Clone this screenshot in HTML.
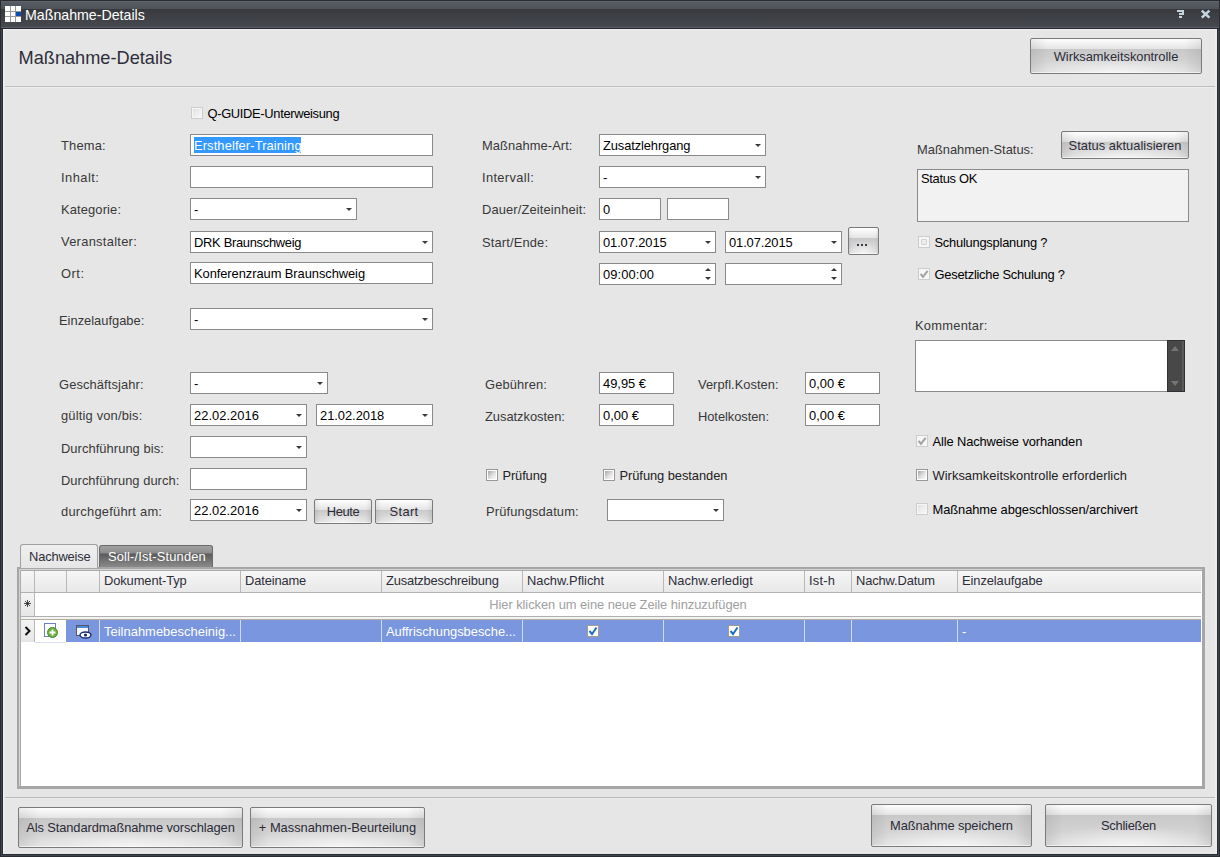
<!DOCTYPE html><html><head><meta charset="utf-8"><style>
html,body{margin:0;padding:0;}
body{width:1220px;height:857px;overflow:hidden;position:relative;background:#2b2e33;font-family:"Liberation Sans",sans-serif;}
.a{position:absolute;}
.t{position:absolute;white-space:pre;font-family:"Liberation Sans",sans-serif;}
</style></head><body>
<div class="a" style="left:0px;top:0px;width:1220px;height:857px;background:#2a2d32;"></div>
<div class="a" style="left:1px;top:1px;width:1218px;height:1px;background:#60646c;"></div>
<div class="a" style="left:1px;top:2px;width:1218px;height:7px;background:linear-gradient(#575b63,#4e525a);"></div>
<div class="a" style="left:1px;top:9px;width:1218px;height:18px;background:linear-gradient(#38393d,#46494f);"></div>
<div class="a" style="left:1px;top:27px;width:1218px;height:1px;background:#5b5e66;"></div>
<div class="a" style="left:0px;top:28px;width:1220px;height:1px;background:#23262b;"></div>
<div class="a" style="left:5px;top:6px;width:16px;height:16px;background:#ffffff;"></div>
<div class="a" style="left:10px;top:6px;width:1px;height:16px;background:#9a9a9a;"></div>
<div class="a" style="left:5px;top:11px;width:16px;height:1px;background:#9a9a9a;"></div>
<div class="a" style="left:15px;top:6px;width:1px;height:16px;background:#9a9a9a;"></div>
<div class="a" style="left:5px;top:16px;width:16px;height:1px;background:#9a9a9a;"></div>
<div class="a" style="left:16px;top:12px;width:5px;height:4px;background:#0a4fb0;"></div>
<div class="t" style="left:25px;top:7.00px;font-size:14.2px;line-height:16px;color:#ffffff;">Maßnahme-Details</div>
<div class="a" style="left:1177px;top:10px;width:7px;height:2px;background:#c6d4e0;"></div>
<div class="a" style="left:1182px;top:12px;width:2px;height:3px;background:#c6d4e0;"></div>
<div class="a" style="left:1179px;top:13px;width:5px;height:2px;background:#c6d4e0;"></div>
<div class="a" style="left:1179px;top:16px;width:3px;height:2px;background:#c6d4e0;"></div>
<svg class="a" style="left:1200px;top:9px" width="12" height="11"><path d="M1.8 1.6L9.4 8.6M9.4 1.6L1.8 8.6" stroke="#c6d4e0" stroke-width="2.6"/></svg>
<div class="a" style="left:1px;top:29px;width:1px;height:827px;background:#42464d;"></div>
<div class="a" style="left:1218px;top:29px;width:1px;height:827px;background:#42464d;"></div>
<div class="a" style="left:1px;top:855px;width:1218px;height:1px;background:#42464d;"></div>
<div class="a" style="left:3px;top:29px;width:1214px;height:825px;background:#e6e6e6;"></div>
<div class="a" style="left:3px;top:29px;width:1214px;height:1px;background:#f0f0f0;"></div>
<div class="a" style="left:3px;top:29px;width:1px;height:825px;background:#f0f0f0;"></div>
<div class="a" style="left:4px;top:30px;width:1px;height:823px;background:#eaeaea;"></div>
<div class="a" style="left:5px;top:86px;width:1210px;height:1px;background:#bdbdbd;"></div>
<div class="a" style="left:5px;top:87px;width:1210px;height:1px;background:#eeeeee;"></div>
<div class="a" style="left:1215px;top:30px;width:2px;height:824px;background:#ececec;"></div>
<div class="t" style="left:18.5px;top:49.50px;font-size:18.2px;line-height:16px;color:#2e2e3a;">Maßnahme-Details</div>
<div class="a" style="left:1030px;top:38px;width:172px;height:36px;box-sizing:border-box;border:1px solid #7a7a7a;border-radius:2px;background:radial-gradient(ellipse 55% 50% at 50% 100%, rgba(255,255,255,0.7), rgba(255,255,255,0) 100%),linear-gradient(to right, rgba(0,0,0,0.07), rgba(0,0,0,0) 10%, rgba(0,0,0,0) 90%, rgba(0,0,0,0.07)),linear-gradient(#fefefe 0px, #e4e4e4 10px, #c8c8c8 10px, #d0d0d0 55%, #dedede 100%);box-shadow:inset 0 -1px 0 rgba(255,255,255,0.6);"></div>
<div class="t" style="left:1030px;width:172px;text-align:center;top:48.50px;font-size:12.9px;line-height:16px;color:#2b2b38;letter-spacing:-0.038px;">Wirksamkeitskontrolle</div>
<div class="a" style="left:5px;top:797px;width:1210px;height:1px;background:#b8b8b8;"></div>
<div class="a" style="left:5px;top:798px;width:1210px;height:1px;background:#eeeeee;"></div>
<div class="a" style="left:191px;top:107px;width:12px;height:12px;box-sizing:border-box;border:1px solid #cdcdcd;background:#f6f6f6;"></div>
<div class="a" style="left:193px;top:109px;width:8px;height:8px;background:linear-gradient(135deg,#e2e2e2,#f8f8f8);"></div>
<div class="t" style="left:207.5px;top:105.50px;font-size:12.9px;line-height:16px;color:#000;letter-spacing:-0.326px;">Q-GUIDE-Unterweisung</div>
<div class="t" style="left:61px;top:137.50px;font-size:12.9px;line-height:16px;color:#383838;letter-spacing:0.2px;">Thema:</div>
<div class="a" style="left:190px;top:134px;width:243px;height:22px;box-sizing:border-box;border:1px solid #8a8a8a;background:#fff;"></div>
<div class="a" style="left:194px;top:137px;width:107px;height:16px;background:#3399ff;"></div>
<div class="t" style="left:194px;top:137.50px;font-size:12.9px;line-height:16px;color:#fff;letter-spacing:0.111px;">Ersthelfer-Training</div>
<div class="t" style="left:61px;top:169.50px;font-size:12.9px;line-height:16px;color:#383838;letter-spacing:0.467px;">Inhalt:</div>
<div class="a" style="left:190px;top:166px;width:243px;height:22px;box-sizing:border-box;border:1px solid #8a8a8a;background:#fff;"></div>
<div class="t" style="left:61px;top:201.50px;font-size:12.9px;line-height:16px;color:#383838;letter-spacing:0.133px;">Kategorie:</div>
<div class="a" style="left:190px;top:198px;width:167px;height:22px;box-sizing:border-box;border:1px solid #8a8a8a;background:#fff;"></div>
<div class="a" style="left:346px;top:208px;width:0;height:0;border-left:3px solid transparent;border-right:3px solid transparent;border-top:3px solid #3a3a3a;"></div>
<div class="t" style="left:194px;top:201.50px;font-size:12.9px;line-height:16px;color:#000;">-</div>
<div class="t" style="left:61px;top:233.50px;font-size:12.9px;line-height:16px;color:#383838;letter-spacing:0.283px;">Veranstalter:</div>
<div class="a" style="left:190px;top:231px;width:243px;height:22px;box-sizing:border-box;border:1px solid #8a8a8a;background:#fff;"></div>
<div class="a" style="left:422px;top:241px;width:0;height:0;border-left:3px solid transparent;border-right:3px solid transparent;border-top:3px solid #3a3a3a;"></div>
<div class="t" style="left:194px;top:234.50px;font-size:12.9px;line-height:16px;color:#000;letter-spacing:-0.287px;">DRK Braunschweig</div>
<div class="t" style="left:61px;top:265.50px;font-size:12.9px;line-height:16px;color:#383838;letter-spacing:0.5px;">Ort:</div>
<div class="a" style="left:190px;top:262px;width:243px;height:22px;box-sizing:border-box;border:1px solid #8a8a8a;background:#fff;"></div>
<div class="t" style="left:194px;top:265.50px;font-size:12.9px;line-height:16px;color:#000;letter-spacing:-0.064px;">Konferenzraum Braunschweig</div>
<div class="t" style="left:59px;top:312.50px;font-size:12.9px;line-height:16px;color:#383838;">Einzelaufgabe:</div>
<div class="a" style="left:190px;top:308px;width:243px;height:22px;box-sizing:border-box;border:1px solid #8a8a8a;background:#fff;"></div>
<div class="a" style="left:422px;top:318px;width:0;height:0;border-left:3px solid transparent;border-right:3px solid transparent;border-top:3px solid #3a3a3a;"></div>
<div class="t" style="left:194px;top:311.50px;font-size:12.9px;line-height:16px;color:#000;">-</div>
<div class="t" style="left:59px;top:376.50px;font-size:12.9px;line-height:16px;color:#383838;letter-spacing:0.115px;">Geschäftsjahr:</div>
<div class="a" style="left:190px;top:372px;width:138px;height:22px;box-sizing:border-box;border:1px solid #8a8a8a;background:#fff;"></div>
<div class="a" style="left:317px;top:382px;width:0;height:0;border-left:3px solid transparent;border-right:3px solid transparent;border-top:3px solid #3a3a3a;"></div>
<div class="t" style="left:194px;top:375.50px;font-size:12.9px;line-height:16px;color:#000;">-</div>
<div class="t" style="left:61px;top:407.50px;font-size:12.9px;line-height:16px;color:#383838;letter-spacing:0.179px;">gültig von/bis:</div>
<div class="a" style="left:190px;top:404px;width:117px;height:22px;box-sizing:border-box;border:1px solid #8a8a8a;background:#fff;"></div>
<div class="a" style="left:296px;top:414px;width:0;height:0;border-left:3px solid transparent;border-right:3px solid transparent;border-top:3px solid #3a3a3a;"></div>
<div class="t" style="left:194px;top:407.50px;font-size:12.9px;line-height:16px;color:#000;letter-spacing:0.044px;">22.02.2016</div>
<div class="a" style="left:316px;top:404px;width:117px;height:22px;box-sizing:border-box;border:1px solid #8a8a8a;background:#fff;"></div>
<div class="a" style="left:422px;top:414px;width:0;height:0;border-left:3px solid transparent;border-right:3px solid transparent;border-top:3px solid #3a3a3a;"></div>
<div class="t" style="left:320px;top:407.50px;font-size:12.9px;line-height:16px;color:#000;letter-spacing:-0.033px;">21.02.2018</div>
<div class="t" style="left:61px;top:440.50px;font-size:12.9px;line-height:16px;color:#383838;letter-spacing:0.062px;">Durchführung bis:</div>
<div class="a" style="left:190px;top:436px;width:117px;height:22px;box-sizing:border-box;border:1px solid #8a8a8a;background:#fff;"></div>
<div class="a" style="left:296px;top:446px;width:0;height:0;border-left:3px solid transparent;border-right:3px solid transparent;border-top:3px solid #3a3a3a;"></div>
<div class="t" style="left:61px;top:472.50px;font-size:12.9px;line-height:16px;color:#383838;letter-spacing:0.039px;">Durchführung durch:</div>
<div class="a" style="left:190px;top:468px;width:117px;height:22px;box-sizing:border-box;border:1px solid #8a8a8a;background:#fff;"></div>
<div class="t" style="left:61px;top:503.50px;font-size:12.9px;line-height:16px;color:#383838;letter-spacing:0.233px;">durchgeführt am:</div>
<div class="a" style="left:190px;top:499px;width:117px;height:22px;box-sizing:border-box;border:1px solid #8a8a8a;background:#fff;"></div>
<div class="a" style="left:296px;top:509px;width:0;height:0;border-left:3px solid transparent;border-right:3px solid transparent;border-top:3px solid #3a3a3a;"></div>
<div class="t" style="left:194px;top:502.50px;font-size:12.9px;line-height:16px;color:#000;letter-spacing:0.044px;">22.02.2016</div>
<div class="a" style="left:314px;top:499px;width:58px;height:25px;box-sizing:border-box;border:1px solid #7a7a7a;border-radius:2px;background:radial-gradient(ellipse 55% 50% at 50% 100%, rgba(255,255,255,0.7), rgba(255,255,255,0) 100%),linear-gradient(to right, rgba(0,0,0,0.07), rgba(0,0,0,0) 10%, rgba(0,0,0,0) 90%, rgba(0,0,0,0.07)),linear-gradient(#fefefe 0px, #e4e4e4 10px, #c8c8c8 10px, #d0d0d0 55%, #dedede 100%);box-shadow:inset 0 -1px 0 rgba(255,255,255,0.6);"></div>
<div class="t" style="left:314px;width:58px;text-align:center;top:503.50px;font-size:12.9px;line-height:16px;color:#2b2b38;letter-spacing:-0.425px;">Heute</div>
<div class="a" style="left:375px;top:499px;width:58px;height:25px;box-sizing:border-box;border:1px solid #7a7a7a;border-radius:2px;background:radial-gradient(ellipse 55% 50% at 50% 100%, rgba(255,255,255,0.7), rgba(255,255,255,0) 100%),linear-gradient(to right, rgba(0,0,0,0.07), rgba(0,0,0,0) 10%, rgba(0,0,0,0) 90%, rgba(0,0,0,0.07)),linear-gradient(#fefefe 0px, #e4e4e4 10px, #c8c8c8 10px, #d0d0d0 55%, #dedede 100%);box-shadow:inset 0 -1px 0 rgba(255,255,255,0.6);"></div>
<div class="t" style="left:375px;width:58px;text-align:center;top:503.50px;font-size:12.9px;line-height:16px;color:#2b2b38;letter-spacing:0.325px;">Start</div>
<div class="t" style="left:482px;top:137.50px;font-size:12.9px;line-height:16px;color:#383838;letter-spacing:0.075px;">Maßnahme-Art:</div>
<div class="a" style="left:599px;top:134px;width:167px;height:22px;box-sizing:border-box;border:1px solid #8a8a8a;background:#fff;"></div>
<div class="a" style="left:755px;top:144px;width:0;height:0;border-left:3px solid transparent;border-right:3px solid transparent;border-top:3px solid #3a3a3a;"></div>
<div class="t" style="left:603px;top:137.50px;font-size:12.9px;line-height:16px;color:#000;letter-spacing:-0.108px;">Zusatzlehrgang</div>
<div class="t" style="left:482px;top:169.50px;font-size:12.9px;line-height:16px;color:#383838;letter-spacing:0.333px;">Intervall:</div>
<div class="a" style="left:599px;top:166px;width:167px;height:22px;box-sizing:border-box;border:1px solid #8a8a8a;background:#fff;"></div>
<div class="a" style="left:755px;top:176px;width:0;height:0;border-left:3px solid transparent;border-right:3px solid transparent;border-top:3px solid #3a3a3a;"></div>
<div class="t" style="left:603px;top:169.50px;font-size:12.9px;line-height:16px;color:#000;">-</div>
<div class="t" style="left:482px;top:201.50px;font-size:12.9px;line-height:16px;color:#383838;letter-spacing:0.135px;">Dauer/Zeiteinheit:</div>
<div class="a" style="left:599px;top:198px;width:62px;height:22px;box-sizing:border-box;border:1px solid #8a8a8a;background:#fff;"></div>
<div class="t" style="left:603px;top:201.50px;font-size:12.9px;line-height:16px;color:#000;">0</div>
<div class="a" style="left:667px;top:198px;width:62px;height:22px;box-sizing:border-box;border:1px solid #8a8a8a;background:#fff;"></div>
<div class="t" style="left:482px;top:234.50px;font-size:12.9px;line-height:16px;color:#383838;letter-spacing:0.15px;">Start/Ende:</div>
<div class="a" style="left:599px;top:231px;width:117px;height:22px;box-sizing:border-box;border:1px solid #8a8a8a;background:#fff;"></div>
<div class="a" style="left:705px;top:241px;width:0;height:0;border-left:3px solid transparent;border-right:3px solid transparent;border-top:3px solid #3a3a3a;"></div>
<div class="t" style="left:603px;top:234.50px;font-size:12.9px;line-height:16px;color:#000;letter-spacing:-0.1px;">01.07.2015</div>
<div class="a" style="left:725px;top:231px;width:117px;height:22px;box-sizing:border-box;border:1px solid #8a8a8a;background:#fff;"></div>
<div class="a" style="left:831px;top:241px;width:0;height:0;border-left:3px solid transparent;border-right:3px solid transparent;border-top:3px solid #3a3a3a;"></div>
<div class="t" style="left:729px;top:234.50px;font-size:12.9px;line-height:16px;color:#000;letter-spacing:-0.1px;">01.07.2015</div>
<div class="a" style="left:848px;top:227px;width:31px;height:28px;box-sizing:border-box;border:1px solid #7a7a7a;border-radius:2px;background:radial-gradient(ellipse 55% 50% at 50% 100%, rgba(255,255,255,0.7), rgba(255,255,255,0) 100%),linear-gradient(to right, rgba(0,0,0,0.07), rgba(0,0,0,0) 10%, rgba(0,0,0,0) 90%, rgba(0,0,0,0.07)),linear-gradient(#fefefe 0px, #e4e4e4 10px, #c8c8c8 10px, #d0d0d0 55%, #dedede 100%);box-shadow:inset 0 -1px 0 rgba(255,255,255,0.6);"></div>
<div class="t" style="left:848px;width:31px;text-align:center;top:234.50px;font-size:12.9px;line-height:16px;color:#2b2b38;"></div>
<div class="a" style="left:857px;top:244px;width:2px;height:2px;background:#3a3a48;"></div>
<div class="a" style="left:861px;top:244px;width:2px;height:2px;background:#3a3a48;"></div>
<div class="a" style="left:865px;top:244px;width:2px;height:2px;background:#3a3a48;"></div>
<div class="a" style="left:599px;top:263px;width:117px;height:22px;box-sizing:border-box;border:1px solid #8a8a8a;background:#fff;"></div>
<div class="a" style="left:705px;top:268px;width:0;height:0;border-left:3px solid transparent;border-right:3px solid transparent;border-bottom:3px solid #3a3a3a;"></div>
<div class="a" style="left:705px;top:277px;width:0;height:0;border-left:3px solid transparent;border-right:3px solid transparent;border-top:3px solid #3a3a3a;"></div>
<div class="t" style="left:603px;top:266.50px;font-size:12.9px;line-height:16px;color:#000;letter-spacing:0.114px;">09:00:00</div>
<div class="a" style="left:725px;top:263px;width:117px;height:22px;box-sizing:border-box;border:1px solid #8a8a8a;background:#fff;"></div>
<div class="a" style="left:831px;top:268px;width:0;height:0;border-left:3px solid transparent;border-right:3px solid transparent;border-bottom:3px solid #3a3a3a;"></div>
<div class="a" style="left:831px;top:277px;width:0;height:0;border-left:3px solid transparent;border-right:3px solid transparent;border-top:3px solid #3a3a3a;"></div>
<div class="t" style="left:485px;top:376.50px;font-size:12.9px;line-height:16px;color:#383838;letter-spacing:0.112px;">Gebühren:</div>
<div class="a" style="left:599px;top:372px;width:75px;height:22px;box-sizing:border-box;border:1px solid #8a8a8a;background:#fff;"></div>
<div class="t" style="left:603px;top:375.50px;font-size:12.9px;line-height:16px;color:#000;">49,95 €</div>
<div class="t" style="left:485px;top:408.50px;font-size:12.9px;line-height:16px;color:#383838;letter-spacing:-0.033px;">Zusatzkosten:</div>
<div class="a" style="left:599px;top:404px;width:75px;height:22px;box-sizing:border-box;border:1px solid #8a8a8a;background:#fff;"></div>
<div class="t" style="left:603px;top:407.50px;font-size:12.9px;line-height:16px;color:#000;">0,00 €</div>
<div class="t" style="left:698px;top:376.50px;font-size:12.9px;line-height:16px;color:#383838;letter-spacing:0.023px;">Verpfl.Kosten:</div>
<div class="a" style="left:805px;top:372px;width:75px;height:22px;box-sizing:border-box;border:1px solid #8a8a8a;background:#fff;"></div>
<div class="t" style="left:809px;top:375.50px;font-size:12.9px;line-height:16px;color:#000;">0,00 €</div>
<div class="t" style="left:698px;top:408.50px;font-size:12.9px;line-height:16px;color:#383838;letter-spacing:-0.055px;">Hotelkosten:</div>
<div class="a" style="left:805px;top:404px;width:75px;height:22px;box-sizing:border-box;border:1px solid #8a8a8a;background:#fff;"></div>
<div class="t" style="left:809px;top:407.50px;font-size:12.9px;line-height:16px;color:#000;">0,00 €</div>
<div class="a" style="left:486px;top:469px;width:12px;height:12px;box-sizing:border-box;border:1px solid #979797;background:#ffffff;"></div>
<div class="a" style="left:488px;top:471px;width:8px;height:8px;background:linear-gradient(135deg,#a8a8a8,#e6e6e6 60%,#fafafa);"></div>
<div class="t" style="left:502.5px;top:467.50px;font-size:12.9px;line-height:16px;color:#222;letter-spacing:-0.133px;">Prüfung</div>
<div class="a" style="left:603px;top:469px;width:12px;height:12px;box-sizing:border-box;border:1px solid #979797;background:#ffffff;"></div>
<div class="a" style="left:605px;top:471px;width:8px;height:8px;background:linear-gradient(135deg,#a8a8a8,#e6e6e6 60%,#fafafa);"></div>
<div class="t" style="left:619.5px;top:467.50px;font-size:12.9px;line-height:16px;color:#222;letter-spacing:-0.062px;">Prüfung bestanden</div>
<div class="t" style="left:486px;top:503.50px;font-size:12.9px;line-height:16px;color:#383838;letter-spacing:0.123px;">Prüfungsdatum:</div>
<div class="a" style="left:607px;top:499px;width:117px;height:22px;box-sizing:border-box;border:1px solid #8a8a8a;background:#fff;"></div>
<div class="a" style="left:713px;top:509px;width:0;height:0;border-left:3px solid transparent;border-right:3px solid transparent;border-top:3px solid #3a3a3a;"></div>
<div class="t" style="left:917px;top:141.50px;font-size:12.9px;line-height:16px;color:#383838;letter-spacing:-0.013px;">Maßnahmen-Status:</div>
<div class="a" style="left:1061px;top:131px;width:128px;height:28px;box-sizing:border-box;border:1px solid #7a7a7a;border-radius:2px;background:radial-gradient(ellipse 55% 50% at 50% 100%, rgba(255,255,255,0.7), rgba(255,255,255,0) 100%),linear-gradient(to right, rgba(0,0,0,0.07), rgba(0,0,0,0) 10%, rgba(0,0,0,0) 90%, rgba(0,0,0,0.07)),linear-gradient(#fefefe 0px, #e4e4e4 10px, #c8c8c8 10px, #d0d0d0 55%, #dedede 100%);box-shadow:inset 0 -1px 0 rgba(255,255,255,0.6);"></div>
<div class="t" style="left:1061px;width:128px;text-align:center;top:137.50px;font-size:12.9px;line-height:16px;color:#2b2b38;letter-spacing:0.021px;">Status aktualisieren</div>
<div class="a" style="left:917px;top:169px;width:272px;height:53px;box-sizing:border-box;border:1px solid #8a8a8a;background:#f2f2f2;"></div>
<div class="t" style="left:921px;top:170.50px;font-size:12.9px;line-height:16px;color:#000;letter-spacing:-0.3px;">Status OK</div>
<div class="a" style="left:918px;top:236px;width:12px;height:12px;box-sizing:border-box;border:1px solid #cdcdcd;background:#f6f6f6;"></div>
<div class="a" style="left:921px;top:239px;width:6px;height:6px;box-sizing:border-box;border:1px solid #d2d2d2;border-radius:1px;background:#ececec;"></div>
<div class="t" style="left:934.5px;top:234.50px;font-size:12.9px;line-height:16px;color:#000;letter-spacing:-0.235px;">Schulungsplanung ?</div>
<div class="a" style="left:918px;top:268px;width:12px;height:12px;box-sizing:border-box;border:1px solid #cdcdcd;background:#f6f6f6;"></div>
<svg class="a" style="left:918px;top:268px" width="12" height="12"><path d="M2.6 5.8 L5 8.8 L9.6 2.8" stroke="#a4a4a4" stroke-width="2.1" fill="none"/></svg>
<div class="t" style="left:934.5px;top:266.50px;font-size:12.9px;line-height:16px;color:#000;letter-spacing:-0.243px;">Gesetzliche Schulung ?</div>
<div class="t" style="left:915px;top:317.50px;font-size:12.9px;line-height:16px;color:#383838;letter-spacing:0.244px;">Kommentar:</div>
<div class="a" style="left:915px;top:340px;width:270px;height:52px;box-sizing:border-box;border:1px solid #8a8a8a;background:#fff;"></div>
<div class="a" style="left:1167px;top:340px;width:18px;height:52px;box-sizing:border-box;border:1px solid #2e3035;background:#484848;"></div>
<div class="a" style="left:1182px;top:341px;width:2px;height:50px;background:#5a5a5a;"></div>
<div class="a" style="left:1171px;top:346px;width:0;height:0;border-left:4.5px solid transparent;border-right:4.5px solid transparent;border-bottom:5px solid #747474;"></div>
<div class="a" style="left:1171px;top:381px;width:0;height:0;border-left:4.5px solid transparent;border-right:4.5px solid transparent;border-top:5px solid #747474;"></div>
<div class="a" style="left:916px;top:435px;width:12px;height:12px;box-sizing:border-box;border:1px solid #cdcdcd;background:#f6f6f6;"></div>
<svg class="a" style="left:916px;top:435px" width="12" height="12"><path d="M2.6 5.8 L5 8.8 L9.6 2.8" stroke="#a4a4a4" stroke-width="2.1" fill="none"/></svg>
<div class="t" style="left:932.5px;top:433.50px;font-size:12.9px;line-height:16px;color:#000;letter-spacing:-0.122px;">Alle Nachweise vorhanden</div>
<div class="a" style="left:916px;top:469px;width:12px;height:12px;box-sizing:border-box;border:1px solid #979797;background:#ffffff;"></div>
<div class="a" style="left:918px;top:471px;width:8px;height:8px;background:linear-gradient(135deg,#a8a8a8,#e6e6e6 60%,#fafafa);"></div>
<div class="t" style="left:932.5px;top:467.50px;font-size:12.9px;line-height:16px;color:#222;letter-spacing:0.03px;">Wirksamkeitskontrolle erforderlich</div>
<div class="a" style="left:916px;top:503px;width:12px;height:12px;box-sizing:border-box;border:1px solid #cdcdcd;background:#f6f6f6;"></div>
<div class="a" style="left:918px;top:505px;width:8px;height:8px;background:linear-gradient(135deg,#e2e2e2,#f8f8f8);"></div>
<div class="t" style="left:932.5px;top:501.50px;font-size:12.9px;line-height:16px;color:#000;letter-spacing:-0.081px;">Maßnahme abgeschlossen/archivert</div>
<div class="a" style="left:17px;top:567px;width:1188px;height:222px;background:#a6a6a6;"></div>
<div class="a" style="left:19px;top:569px;width:1183px;height:1px;background:#d4d4d4;"></div>
<div class="a" style="left:19px;top:569px;width:1px;height:217px;background:#d4d4d4;"></div>
<div class="a" style="left:20px;top:570px;width:1182px;height:216px;background:#ffffff;"></div>
<div class="a" style="left:20px;top:570px;width:1182px;height:1px;background:#aaaaaa;"></div>
<div class="a" style="left:20px;top:570px;width:1px;height:216px;background:#aaaaaa;"></div>
<div class="a" style="left:20px;top:544px;width:78px;height:24px;box-sizing:border-box;border:1px solid #a0a0a0;border-bottom:none;border-radius:3px 3px 0 0;background:linear-gradient(#efefef,#e6e6e6);"></div>
<div class="t" style="left:29px;top:548.50px;font-size:12.9px;line-height:16px;color:#2e2e3a;letter-spacing:-0.162px;">Nachweise</div>
<div class="a" style="left:99px;top:545px;width:114px;height:22px;box-sizing:border-box;border:1px solid #6a6a6a;border-bottom:none;border-radius:3px 3px 0 0;background:linear-gradient(#a2a2a2 0px,#8c8c8c 7px,#5a5a5a 8px,#6a6a6a 12px,#8a8a8a 100%);"></div>
<div class="t" style="left:108px;top:548.50px;font-size:12.9px;line-height:16px;color:#ffffff;letter-spacing:0.15px;">Soll-/Ist-Stunden</div>
<div class="a" style="left:21px;top:571px;width:1180px;height:21px;background:linear-gradient(#f6f6f6,#e8e8e8);"></div>
<div class="a" style="left:21px;top:592px;width:1180px;height:1px;background:#b0b0b0;"></div>
<div class="a" style="left:34px;top:571px;width:1px;height:21px;background:#b8b8b8;"></div>
<div class="a" style="left:66px;top:571px;width:1px;height:21px;background:#b8b8b8;"></div>
<div class="a" style="left:99px;top:571px;width:1px;height:21px;background:#b8b8b8;"></div>
<div class="a" style="left:240px;top:571px;width:1px;height:21px;background:#b8b8b8;"></div>
<div class="a" style="left:381px;top:571px;width:1px;height:21px;background:#b8b8b8;"></div>
<div class="a" style="left:522px;top:571px;width:1px;height:21px;background:#b8b8b8;"></div>
<div class="a" style="left:663px;top:571px;width:1px;height:21px;background:#b8b8b8;"></div>
<div class="a" style="left:804px;top:571px;width:1px;height:21px;background:#b8b8b8;"></div>
<div class="a" style="left:851px;top:571px;width:1px;height:21px;background:#b8b8b8;"></div>
<div class="a" style="left:957px;top:571px;width:1px;height:21px;background:#b8b8b8;"></div>
<div class="t" style="left:104px;top:572.50px;font-size:12.9px;line-height:16px;color:#2e2e3a;letter-spacing:-0.1px;">Dokument-Typ</div>
<div class="t" style="left:245px;top:572.50px;font-size:12.9px;line-height:16px;color:#2e2e3a;letter-spacing:-0.138px;">Dateiname</div>
<div class="t" style="left:386px;top:572.50px;font-size:12.9px;line-height:16px;color:#2e2e3a;letter-spacing:-0.188px;">Zusatzbeschreibung</div>
<div class="t" style="left:527px;top:572.50px;font-size:12.9px;line-height:16px;color:#2e2e3a;letter-spacing:-0.025px;">Nachw.Pflicht</div>
<div class="t" style="left:668px;top:572.50px;font-size:12.9px;line-height:16px;color:#2e2e3a;letter-spacing:0.023px;">Nachw.erledigt</div>
<div class="t" style="left:809px;top:572.50px;font-size:12.9px;line-height:16px;color:#2e2e3a;letter-spacing:0.225px;">Ist-h</div>
<div class="t" style="left:856px;top:572.50px;font-size:12.9px;line-height:16px;color:#2e2e3a;letter-spacing:-0.12px;">Nachw.Datum</div>
<div class="t" style="left:962px;top:572.50px;font-size:12.9px;line-height:16px;color:#2e2e3a;letter-spacing:-0.083px;">Einzelaufgabe</div>
<div class="a" style="left:21px;top:593px;width:13px;height:23px;background:linear-gradient(#f4f4f4,#e6e6e6);"></div>
<div class="a" style="left:34px;top:593px;width:1px;height:23px;background:#b8b8b8;"></div>
<svg class="a" style="left:24px;top:600px" width="7" height="7"><g stroke="#222" stroke-width="0.8"><path d="M3.5 0v7M0 3.5h7M1 1l5 5M6 1l-5 5"/></g></svg>
<div class="t" style="left:35px;width:1166px;text-align:center;top:596.50px;font-size:12.9px;line-height:16px;color:#a0a0a0;letter-spacing:-0.06px;">Hier klicken um eine neue Zeile hinzuzufügen</div>
<div class="a" style="left:21px;top:616px;width:1180px;height:1px;background:#b0b0b0;"></div>
<div class="a" style="left:21px;top:617px;width:1180px;height:2px;background:#f4f4f4;"></div>
<div class="a" style="left:21px;top:619px;width:1180px;height:1px;background:#b4ae9f;"></div>
<div class="a" style="left:21px;top:620px;width:13px;height:22px;background:linear-gradient(#f4f4f4,#e6e6e6);"></div>
<div class="a" style="left:34px;top:620px;width:1px;height:22px;background:#b8b8b8;"></div>
<svg class="a" style="left:23px;top:625px" width="10" height="12"><path d="M2.5 2 L6.5 6 L2.5 10" stroke="#111" stroke-width="2" fill="none"/></svg>
<div class="a" style="left:35px;top:620px;width:31px;height:22px;background:#ffffff;"></div>
<div class="a" style="left:66px;top:620px;width:1135px;height:22px;background:#7996df;"></div>
<div class="a" style="left:99px;top:620px;width:1px;height:22px;background:#d0daf2;"></div>
<div class="a" style="left:240px;top:620px;width:1px;height:22px;background:#d0daf2;"></div>
<div class="a" style="left:381px;top:620px;width:1px;height:22px;background:#d0daf2;"></div>
<div class="a" style="left:522px;top:620px;width:1px;height:22px;background:#d0daf2;"></div>
<div class="a" style="left:663px;top:620px;width:1px;height:22px;background:#d0daf2;"></div>
<div class="a" style="left:804px;top:620px;width:1px;height:22px;background:#d0daf2;"></div>
<div class="a" style="left:851px;top:620px;width:1px;height:22px;background:#d0daf2;"></div>
<div class="a" style="left:957px;top:620px;width:1px;height:22px;background:#d0daf2;"></div>
<div class="a" style="left:35px;top:642px;width:31px;height:1px;background:#d8dff0;"></div>
<svg class="a" style="left:42px;top:622px" width="20" height="20"><rect x="2.5" y="1.5" width="11" height="13" fill="#fff" stroke="#6d7fc0"/><circle cx="10.5" cy="10.5" r="5" fill="#6cb33e" stroke="#4d8a28"/><path d="M10.5 7.5v6M7.5 10.5h6" stroke="#fff" stroke-width="1.8"/></svg>
<svg class="a" style="left:74px;top:622px" width="20" height="20"><rect x="2.5" y="3.5" width="12" height="10" fill="#f4f6fb" stroke="#556"/><rect x="3" y="4" width="11" height="2" fill="#4a8ad8"/><ellipse cx="11.5" cy="13" rx="5.5" ry="3" fill="#fff" stroke="#1a2a70" stroke-width="1.4"/><circle cx="11.5" cy="13" r="1.6" fill="#1a2a70"/></svg>
<div class="t" style="left:104px;top:623.50px;font-size:12.9px;line-height:16px;color:#ffffff;letter-spacing:0.038px;">Teilnahmebescheinig...</div>
<div class="t" style="left:386px;top:623.50px;font-size:12.9px;line-height:16px;color:#ffffff;letter-spacing:-0.019px;">Auffrischungsbesche...</div>
<div class="t" style="left:962px;top:623.50px;font-size:12.9px;line-height:16px;color:#ffffff;">-</div>
<div class="a" style="left:587px;top:625px;width:12px;height:12px;box-sizing:border-box;border:1px solid #a39c90;background:#fff;"></div>
<svg class="a" style="left:587px;top:625px" width="12" height="12"><path d="M2.5 6 L5 9 L9.5 2.5" stroke="#1f6fc0" stroke-width="2" fill="none"/></svg>
<div class="a" style="left:728px;top:625px;width:12px;height:12px;box-sizing:border-box;border:1px solid #a39c90;background:#fff;"></div>
<svg class="a" style="left:728px;top:625px" width="12" height="12"><path d="M2.5 6 L5 9 L9.5 2.5" stroke="#1f6fc0" stroke-width="2" fill="none"/></svg>
<div class="a" style="left:18px;top:807px;width:225px;height:41px;box-sizing:border-box;border:1px solid #7a7a7a;border-radius:2px;background:radial-gradient(ellipse 55% 50% at 50% 100%, rgba(255,255,255,0.7), rgba(255,255,255,0) 100%),linear-gradient(to right, rgba(0,0,0,0.07), rgba(0,0,0,0) 10%, rgba(0,0,0,0) 90%, rgba(0,0,0,0.07)),linear-gradient(#fefefe 0px, #e4e4e4 10px, #c8c8c8 10px, #d0d0d0 55%, #dedede 100%);box-shadow:inset 0 -1px 0 rgba(255,255,255,0.6);"></div>
<div class="t" style="left:18px;width:225px;text-align:center;top:819.50px;font-size:12.9px;line-height:16px;color:#2b2b38;letter-spacing:-0.113px;">Als Standardmaßnahme vorschlagen</div>
<div class="a" style="left:250px;top:807px;width:175px;height:41px;box-sizing:border-box;border:1px solid #7a7a7a;border-radius:2px;background:radial-gradient(ellipse 55% 50% at 50% 100%, rgba(255,255,255,0.7), rgba(255,255,255,0) 100%),linear-gradient(to right, rgba(0,0,0,0.07), rgba(0,0,0,0) 10%, rgba(0,0,0,0) 90%, rgba(0,0,0,0.07)),linear-gradient(#fefefe 0px, #e4e4e4 10px, #c8c8c8 10px, #d0d0d0 55%, #dedede 100%);box-shadow:inset 0 -1px 0 rgba(255,255,255,0.6);"></div>
<div class="t" style="left:250px;width:175px;text-align:center;top:819.50px;font-size:12.9px;line-height:16px;color:#2b2b38;letter-spacing:-0.03px;">+ Massnahmen-Beurteilung</div>
<div class="a" style="left:871px;top:804px;width:161px;height:43px;box-sizing:border-box;border:1px solid #7a7a7a;border-radius:2px;background:radial-gradient(ellipse 55% 50% at 50% 100%, rgba(255,255,255,0.7), rgba(255,255,255,0) 100%),linear-gradient(to right, rgba(0,0,0,0.07), rgba(0,0,0,0) 10%, rgba(0,0,0,0) 90%, rgba(0,0,0,0.07)),linear-gradient(#fefefe 0px, #e4e4e4 10px, #c8c8c8 10px, #d0d0d0 55%, #dedede 100%);box-shadow:inset 0 -1px 0 rgba(255,255,255,0.6);"></div>
<div class="t" style="left:871px;width:161px;text-align:center;top:817.50px;font-size:12.9px;line-height:16px;color:#2b2b38;letter-spacing:-0.1px;">Maßnahme speichern</div>
<div class="a" style="left:1045px;top:804px;width:167px;height:43px;box-sizing:border-box;border:1px solid #7a7a7a;border-radius:2px;background:radial-gradient(ellipse 55% 50% at 50% 100%, rgba(255,255,255,0.7), rgba(255,255,255,0) 100%),linear-gradient(to right, rgba(0,0,0,0.07), rgba(0,0,0,0) 10%, rgba(0,0,0,0) 90%, rgba(0,0,0,0.07)),linear-gradient(#fefefe 0px, #e4e4e4 10px, #c8c8c8 10px, #d0d0d0 55%, #dedede 100%);box-shadow:inset 0 -1px 0 rgba(255,255,255,0.6);"></div>
<div class="t" style="left:1045px;width:167px;text-align:center;top:817.50px;font-size:12.9px;line-height:16px;color:#2b2b38;letter-spacing:-0.25px;">Schließen</div>
</body></html>
